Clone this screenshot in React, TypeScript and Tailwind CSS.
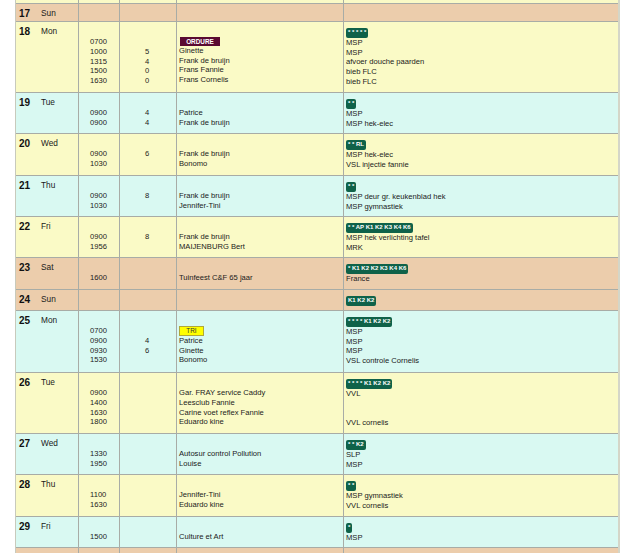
const Y = "bg-[#fafac6]";
const C = "bg-[#d9f9f2]";
const P = "bg-[#eccdac]";

type Row = {
  h: string;
  bg: string;
  n?: string;
  d?: string;
  t?: string[];
  c?: string[];
  w?: string[];
  tag?: "ORDURE" | "TRI";
  b?: string;
  r?: string[];
};

const rows: Row[] = [
  { h: "h-[4px]", bg: Y },
  { h: "h-[18px]", bg: P, n: "17", d: "Sun" },
  { h: "h-[71px]", bg: Y, n: "18", d: "Mon", t: ["0700", "1000", "1315", "1500", "1630"], c: ["", "5", "4", "0", "0"], tag: "ORDURE", w: ["Ginette", "Frank de bruijn", "Frans Fannie", "Frans Cornelis"], b: "* * * * *", r: ["MSP", "MSP", "afvoer douche paarden", "bieb FLC", "bieb FLC"] },
  { h: "h-[41px]", bg: C, n: "19", d: "Tue", t: ["0900", "0900"], c: ["4", "4"], w: ["Patrice", "Frank de bruijn"], b: "* *", r: ["MSP", "MSP hek-elec"] },
  { h: "h-[42px]", bg: Y, n: "20", d: "Wed", t: ["0900", "1030"], c: ["6", ""], w: ["Frank de bruijn", "Bonomo"], b: "* * RL", r: ["MSP hek-elec", "VSL injectie fannie"] },
  { h: "h-[41px]", bg: C, n: "21", d: "Thu", t: ["0900", "1030"], c: ["8", ""], w: ["Frank de bruijn", "Jennifer-Tini"], b: "* *", r: ["MSP deur gr. keukenblad hek", "MSP gymnastiek"] },
  { h: "h-[41px]", bg: Y, n: "22", d: "Fri", t: ["0900", "1956"], c: ["8", ""], w: ["Frank de bruijn", "MAIJENBURG Bert"], b: "* * AP K1 K2 K3 K4 K6", r: ["MSP hek verlichting tafel", "MRK"] },
  { h: "h-[32px]", bg: P, n: "23", d: "Sat", t: ["1600"], c: [""], w: ["Tuinfeest C&F 65 jaar"], b: "* K1 K2 K2 K3 K4 K6", r: ["France"] },
  { h: "h-[21px]", bg: P, n: "24", d: "Sun", b: "K1 K2 K2" },
  { h: "h-[62px]", bg: C, n: "25", d: "Mon", t: ["0700", "0900", "0930", "1530"], c: ["", "4", "6", ""], tag: "TRI", w: ["Patrice", "Ginette", "Bonomo"], b: "* * * * K1 K2 K2", r: ["MSP", "MSP", "MSP", "VSL controle Cornelis"] },
  { h: "h-[61px]", bg: Y, n: "26", d: "Tue", t: ["0900", "1400", "1630", "1800"], c: ["", "", "", ""], w: ["Gar. FRAY service Caddy", "Leesclub Fannie", "Carine voet reflex Fannie", "Eduardo kine"], b: "* * * * K1 K2 K2", r: ["VVL", "\u00a0", "\u00a0", "VVL cornelis"] },
  { h: "h-[41px]", bg: C, n: "27", d: "Wed", t: ["1330", "1950"], c: ["", ""], w: ["Autosur control Pollution", "Louise"], b: "* * K2", r: ["SLP", "MSP"] },
  { h: "h-[42px]", bg: Y, n: "28", d: "Thu", t: ["1100", "1630"], c: ["", ""], w: ["Jennifer-Tini", "Eduardo kine"], b: "* *", r: ["MSP gymnastiek", "VVL cornelis"] },
  { h: "h-[31px]", bg: C, n: "29", d: "Fri", t: ["1500"], c: [""], w: ["Culture et Art"], b: "*", r: ["MSP"] },
  { h: "h-[6px]", bg: P },
];

function Lines({ items }: { items?: string[] }) {
  return (
    <>
      {(items ?? []).map((x, i) => (
        <div key={i} className="h-[9.8px] leading-[9.8px] whitespace-nowrap">{x || "\u00a0"}</div>
      ))}
    </>
  );
}

export default function App() {
  return (
    <div className="w-[640px] h-[553px] overflow-hidden bg-white font-['Liberation_Sans',Arial,sans-serif] text-[7.6px] text-[#1a1a1a]">
      <div className="ml-[15px] w-[605px] border-r-2 border-r-[#d4d6c8] border-l border-l-[#c8cabc]">
        {rows.map((r, i) => (
          <div key={i} className={`flex ${r.h} ${r.bg} overflow-hidden ${i < rows.length - 1 ? "border-b border-b-[#a8aca6]" : ""}`}>
            <div className="w-[63px] shrink-0 border-r border-r-[#a8aca6] flex items-start pl-[3px] pt-[3px]">
              {r.n && <span className="w-[22px] text-[10px] leading-[13px] font-bold text-[#111]">{r.n}</span>}
              {r.d && <span className="text-[8.3px] leading-[13px]">{r.d}</span>}
            </div>
            <div className="w-[41px] shrink-0 border-r border-r-[#a8aca6] pt-[15px] pl-[11px]">
              <Lines items={r.t} />
            </div>
            <div className="w-[57px] shrink-0 border-r border-r-[#a8aca6] pt-[15px] text-center pr-[2px]">
              <Lines items={r.c} />
            </div>
            <div className="w-[167px] shrink-0 border-r border-r-[#a8aca6] pt-[15px] pl-[2px]">
              {r.tag === "ORDURE" && (
                <div className="h-[8.8px] flex items-start">
                  <span className="ml-[1px] w-[40px] h-[9px] bg-[#5a0a32] text-white text-[6.4px] font-bold leading-[9px] text-center shrink-0">ORDURE</span>
                </div>
              )}
              {r.tag === "TRI" && (
                <div className="h-[9.8px] flex items-start">
                  <span className="w-[25px] h-[10px] bg-[#ffff00] border border-[#b0a838] text-[#333] text-[6.4px] leading-[8px] text-center shrink-0">TRI</span>
                </div>
              )}
              <Lines items={r.w} />
            </div>
            <div className="flex-1 min-w-0 pl-[2px] pt-[6px]">
              {r.b && (
                <div className="h-[9.8px] flex items-start">
                  <span className="h-[9.5px] px-[2px] rounded-[2px] bg-[#0f6249] text-white text-[6px] font-bold leading-[9.5px] whitespace-nowrap">{r.b}</span>
                </div>
              )}
              <Lines items={r.r} />
            </div>
          </div>
        ))}
      </div>
    </div>
  );
}
